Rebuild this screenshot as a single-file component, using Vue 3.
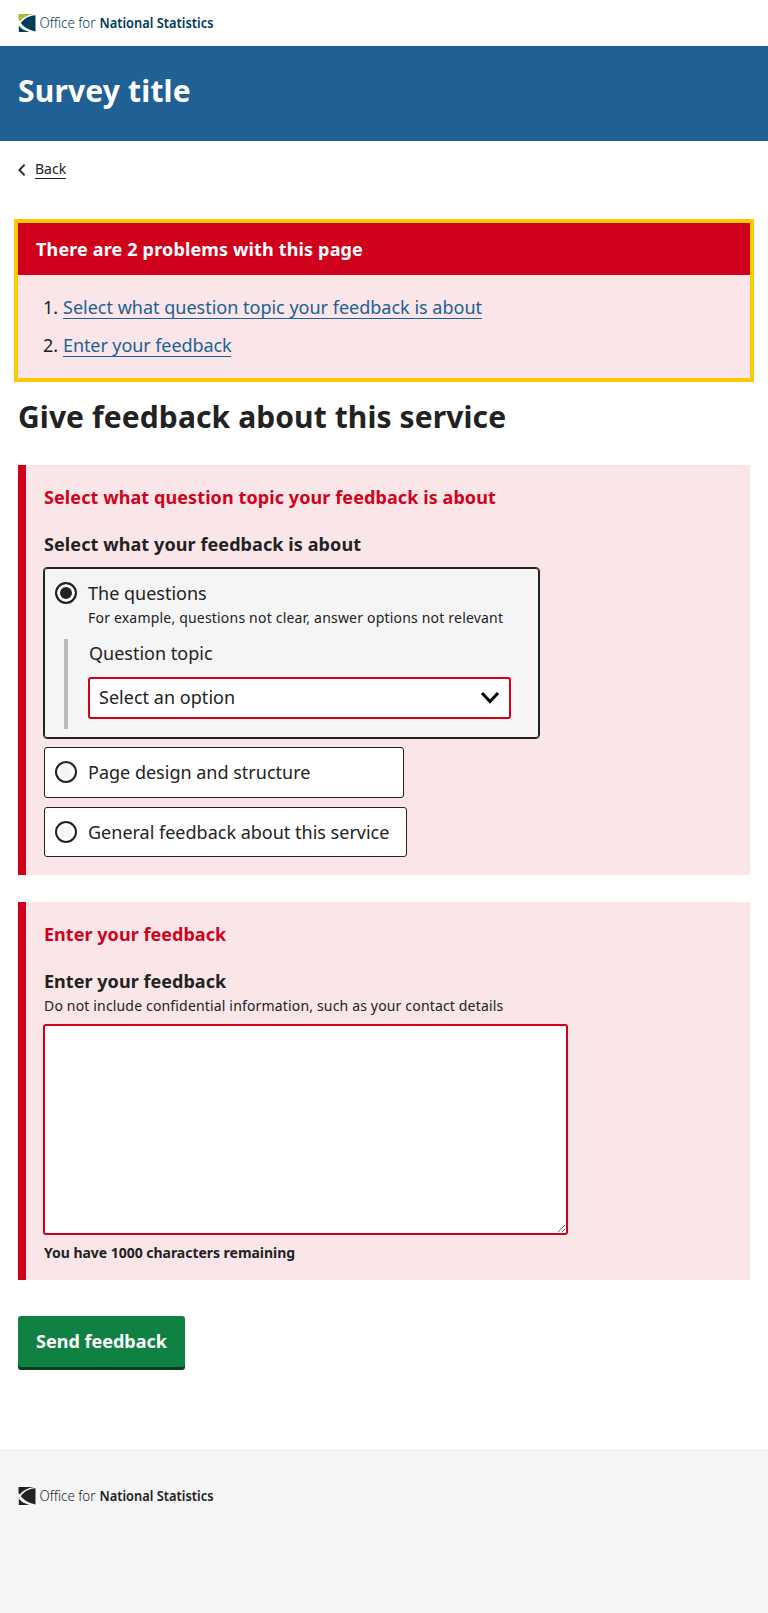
<script setup>
import { ref } from 'vue'

const topic = ref('questions')
const feedback = ref('')
const errors = [
  { id: 'select', text: 'Select what question topic your feedback is about' },
  { id: 'textarea', text: 'Enter your feedback' },
]
</script>

<template>
  <div class="page">
    <header>
      <div class="brand">
        <svg class="logo" width="220" height="30" viewBox="0 0 220 30" role="img" aria-label="Office for National Statistics">
          <path class="accent" d="M0.500 3H16Q6 4.500 1.800 10.500L0.500 8.500Z" />
          <path class="mark" d="M17.500 4.200V20.500C10 19 5 15.500 2.800 12C6 7.500 11 4.600 17.500 4.200Z" />
          <path class="mark" d="M0.800 14.500Q4 19 11.500 21H0.800Z" />
          <text x="21.500" y="17.300" textLength="56" lengthAdjust="spacingAndGlyphs">Office for</text>
          <text class="strong" x="81.500" y="17.300" textLength="114" lengthAdjust="spacingAndGlyphs">National Statistics</text>
        </svg>
      </div>
      <div class="banner"><div class="survey-title">Survey title</div></div>
    </header>

    <main>
      <nav class="back">
        <svg width="8" height="12" viewBox="0 0 8 12"><path d="M6.600 0.700L1.400 6L6.600 11.300" fill="none" stroke="#222" stroke-width="1.800" /></svg>
        <a href="#">Back</a>
      </nav>

      <section class="summary">
        <h2>There are 2 problems with this page</h2>
        <ol>
          <li v-for="(e, i) in errors" :key="e.id"><span class="num">{{ i + 1 }}.</span><a :href="'#' + e.id">{{ e.text }}</a></li>
        </ol>
      </section>

      <h1>Give feedback about this service</h1>

      <section class="panel first">
        <p class="error">Select what question topic your feedback is about</p>
        <p class="label">Select what your feedback is about</p>
        <div class="option wide checked">
          <input id="questions" v-model="topic" type="radio" value="questions" />
          <div class="body">
            <label for="questions">The questions</label>
            <p class="hint">For example, questions not clear, answer options not relevant</p>
            <div class="nested">
              <label for="select">Question topic</label>
              <div class="select">
                <select id="select"><option>Select an option</option></select>
                <svg width="20" height="14" viewBox="0 0 20 14"><path d="M2 2L10 10.500L18 2" fill="none" stroke="#000" stroke-width="3" /></svg>
              </div>
            </div>
          </div>
        </div>
        <div class="option design">
          <input id="design" v-model="topic" type="radio" value="design" />
          <label for="design">Page design and structure</label>
        </div>
        <div class="option general">
          <input id="general" v-model="topic" type="radio" value="general" />
          <label for="general">General feedback about this service</label>
        </div>
      </section>

      <section class="panel second">
        <p class="error">Enter your feedback</p>
        <label class="label" for="textarea">Enter your feedback</label>
        <p class="hint">Do not include confidential information, such as your contact details</p>
        <textarea id="textarea" v-model="feedback" maxlength="1000"></textarea>
        <p class="count">You have {{ 1000 - feedback.length }} characters remaining</p>
      </section>

      <button type="button">Send feedback</button>
    </main>

    <footer>
      <svg class="logo mono" width="220" height="30" viewBox="0 0 220 30" role="img" aria-label="Office for National Statistics">
        <path class="accent" d="M0.500 3H16Q6 4.500 1.800 10.500L0.500 8.500Z" />
        <path class="mark" d="M17.500 4.200V20.500C10 19 5 15.500 2.800 12C6 7.500 11 4.600 17.500 4.200Z" />
        <path class="mark" d="M0.800 14.500Q4 19 11.500 21H0.800Z" />
        <text x="21.500" y="17.300" textLength="56" lengthAdjust="spacingAndGlyphs">Office for</text>
        <text class="strong" x="81.500" y="17.300" textLength="114" lengthAdjust="spacingAndGlyphs">National Statistics</text>
      </svg>
    </footer>
  </div>
</template>

<style>
body { margin: 0; background: #fff; }
</style>

<style scoped>
* { box-sizing: border-box; }
.page {
  display: flex;
  flex-direction: column;
  height: 1613px;
  font: 18px/28px "Noto Sans", sans-serif;
  color: #222;
}
h1, h2, p, ol { margin: 0; padding: 0; }
.brand { height: 46px; padding: 11px 18px 0; }
.logo { display: block; fill: #003c57; }
.logo .accent { fill: #a8bd3a; }
.logo text { font: 350 15px "Noto Sans", sans-serif; }
.logo .strong { font-weight: 600; }
.logo.mono, .logo.mono .accent { fill: #222; }
.banner { height: 95px; padding: 25px 18px 0; background: #206095; }
.survey-title { font-size: 30px; line-height: 40px; font-weight: 700; letter-spacing: 0.18px; color: #fff; }
main { flex: 1; padding: 0 18px; }
.back { display: flex; align-items: center; gap: 9px; height: 56px; font-size: 14px; }
.back svg { margin-top: 2px; }
.back a { color: #222; line-height: 19px; border-bottom: 1px solid #222; text-decoration: none; }
.summary { height: 155px; margin-top: 26px; background: #fae6e8; outline: 4px solid #fbc900; }
.summary h2 { height: 52px; padding: 12px 18px; background: #d0021b; color: #fff; font-size: 18px; line-height: 28px; font-weight: 700; letter-spacing: 0.15px; }
.summary ol { display: flex; flex-direction: column; gap: 10px; padding: 18px 0 0 25px; list-style: none; }
.summary li { display: flex; height: 28px; }
.num { width: 20px; }
.summary a { height: 26px; color: #206095; border-bottom: 1px solid #206095; text-decoration: none; }
.summary li:last-child a { letter-spacing: -0.09px; }
h1 { margin-top: 19px; font-size: 30px; line-height: 40px; font-weight: 700; letter-spacing: 0.1px; }
.panel { border-left: 8px solid #d0021b; background: #fae6e8; padding: 18px; }
.first { height: 410px; margin-top: 28px; }
.second { height: 378px; margin-top: 27px; }
.error, .label { display: block; font-weight: 700; letter-spacing: 0.09px; }
.second .error, .second .label { letter-spacing: 0.04px; }
.error { color: #d0021b; margin-bottom: 19px; }
.option { display: flex; gap: 11px; border: 1px solid #222; border-radius: 3px; background: #fff; padding: 10px; }
.wide { width: 495px; height: 170px; margin-top: 10px; }
.checked { outline: 1px solid #222; background: #f5f5f5; }
.design { width: 360px; height: 51px; margin-top: 9px; }
.general { width: 363px; height: 50px; margin-top: 9px; }
.option input { appearance: none; flex: none; width: 22px; height: 22px; margin: 3px 0 0; border: 2px solid #222; border-radius: 50%; background: #f5f5f5; box-shadow: inset 0 0 0 3px #fff; }
.option input:checked { background: #222; }
.option label { display: block; }
.hint { font-size: 14px; line-height: 22px; letter-spacing: 0.165px; }
.body .hint { letter-spacing: 0.195px; white-space: nowrap; }
.nested { height: 90px; width: 447px; margin: 10px 0 0 -24px; padding-left: 20px; border-left: 4px solid #bcbcbc; }
.nested > label { padding-left: 1px; }
.select { display: flex; align-items: center; justify-content: space-between; width: 423px; height: 42px; margin-top: 10px; padding: 0 9px; border: 2px solid #d0021b; border-radius: 3px; background: #fff; }
select { appearance: none; border: 0; padding: 0; background: none; font: inherit; letter-spacing: 0.03px; color: inherit; height: 28px; width: 300px; margin-top: -3px; }
textarea { display: block; width: 525px; height: 211px; margin: 7px 0 0 -1px; border: 2px solid #d0021b; border-radius: 3px; background: #fff; font: inherit; resize: both; outline: 0; }
.count { margin-top: 7px; font-size: 14px; line-height: 22px; font-weight: 700; letter-spacing: -0.03px; }
button { display: block; width: 167px; height: 51px; margin-top: 36px; padding: 0 0 2px; border: 0; border-radius: 3px; background: #0f8243; box-shadow: 0 3px 0 #073d20; color: #fff; font: 700 18px/28px "Noto Sans", sans-serif; }
footer { height: 164px; padding: 35px 18px 0; background: #f5f5f5; }
</style>
